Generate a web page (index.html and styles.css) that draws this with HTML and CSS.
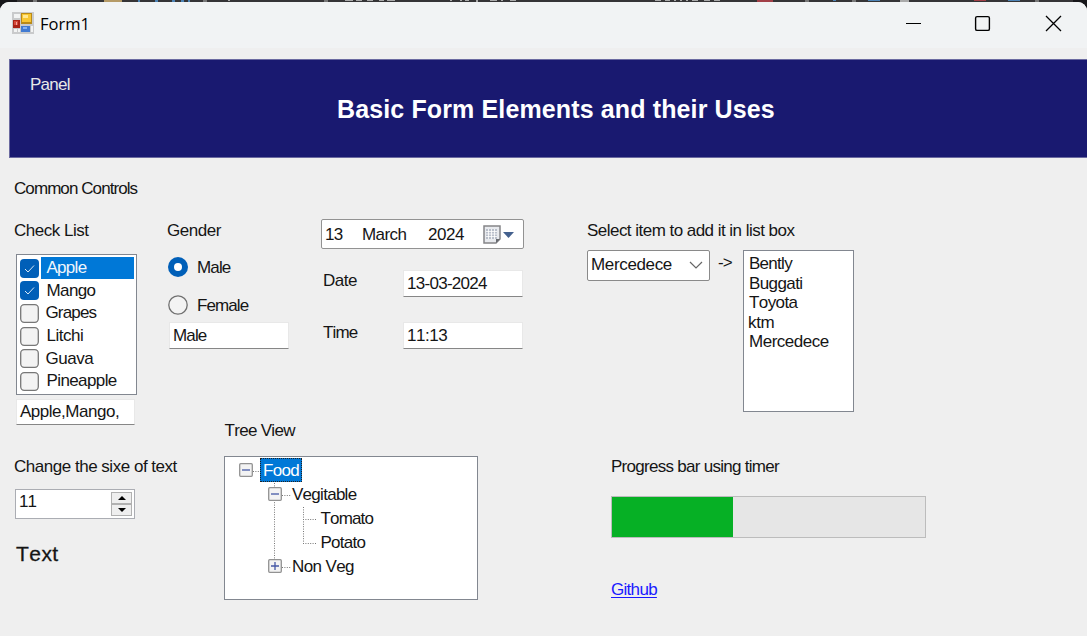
FILE: index.html
```html
<!DOCTYPE html>
<html lang="en">
<head>
<meta charset="utf-8">
<title>Form1</title>
<link rel="stylesheet" href="styles.css">
</head>
<body>
<div class="desktop">
<svg class="backdrop" width="1087" height="8" aria-hidden="true">
  <path fill="#353436" d="M0 0h1087v8H0z"/>
  <path fill="#17171a" d="M0 0h17v8H0zM1073 0h14v8h-14z"/>
  <path fill="#b59a66" d="M104 0h18v2h-18z"/>
  <path fill="#4d83b5" d="M138 0h2v2h-2zM155 0h3v2h-3zM172 0h3v2h-3zM181 0h3v2h-3zM188 0h2v2h-2zM833 0h3v1h-3zM868 0h12v1h-12zM1008 0h12v1h-12z"/>
  <path fill="#777" d="M33 0h4v2h-4zM203 0h4v2h-4zM324 0h4v2h-4zM805 0h4v2h-4zM852 0h4v2h-4zM1035 0h4v2h-4z"/>
  <path fill="#aaa" d="M228 0h2v1h-2zM345 0h8v1h-8zM356 0h6v1h-6zM367 0h6v1h-6zM379 0h5v1h-5zM387 0h8v1h-8zM450 0h2v1h-2zM460 0h2v1h-2zM465 0h4v1h-4zM476 0h2v2h-2zM490 0h7v1h-7zM501 0h2v1h-2zM510 0h6v1h-6zM900 0h9v2h-9zM655 0h6v1h-6zM665 0h5v1h-5zM674 0h2v1h-2zM680 0h2v1h-2zM686 0h2v1h-2zM692 0h6v1h-6zM704 0h6v1h-6zM714 0h6v1h-6z"/>
  <path fill="#a23f47" d="M757 0h16v2h-16zM974 0h12v1h-12z"/>
</svg>
<div class="window">
  <header class="titlebar">
    <svg class="app-icon" width="22" height="22" viewBox="0 0 22 22">
      <path fill="#c9cacb" d="M0 0h22v22H0z"/>
      <path fill="#f2f3f3" d="M2 2h6v4H2zM2 17h3v3H2zM6 17h2v3H6zM19 14h2v6h-2z"/>
      <path fill="#b98a18" d="M9 1h11v11H9z"/><path fill="#f8c632" d="M10 2h9v8h-9z"/><path fill="#ffe892" d="M11 3h5v3h-5z"/>
      <path fill="#a82318" d="M1 8h7v8H1z"/><path fill="#d5493b" d="M2 9h4v4H2z"/><path fill="#f3a59c" d="M4 10h1v3H4z"/>
      <path fill="#427bd2" d="M9 14h9v6H9z"/><path fill="#83b1f4" d="M11 15h4v2h-4z"/>
    </svg>
    <span class="window-title">Form1</span>
    <svg class="window-buttons" width="158" height="18" viewBox="0 0 158 18" fill="none" stroke="#000">
      <path d="M1 9.5h15" stroke-width="1.1"/>
      <rect x="70.6" y="2.6" width="13.8" height="13.8" rx="1.5" stroke-width="1.4"/>
      <path d="M141 2l15 15M156 2L141 17" stroke-width="1.3"/>
    </svg>
  </header>

  <section class="banner">
    <span class="banner-tag tight">Panel</span>
    <h1>Basic Form Elements and their Uses</h1>
  </section>

  <main>
    <div class="label section-name tightest">Common Controls</div>
    <div class="columns">
      <section class="choices">
        <div class="label loose">Check List</div>
        <div class="checklist">
          <div class="check-row"><svg class="check" viewBox="0 0 19 19"><rect width="19" height="19" rx="4" fill="#005fb8"/><path d="M5 10l3 3 6-6.5" fill="none" stroke="#d8e8f6"/></svg><span class="selected tight">Apple</span></div>
          <div class="check-row"><svg class="check" viewBox="0 0 19 19"><rect width="19" height="19" rx="4" fill="#005fb8"/><path d="M5 10l3 3 6-6.5" fill="none" stroke="#d8e8f6"/></svg><span>Mango</span></div>
          <div class="check-row"><svg class="check" viewBox="0 0 19 19"><rect x=".7" y=".7" width="17.6" height="17.6" rx="3.5" fill="#f3f3f3" stroke="#777" stroke-width="1.3"/></svg><span class="round tighter">Grapes</span></div>
          <div class="check-row"><svg class="check" viewBox="0 0 19 19"><rect x=".7" y=".7" width="17.6" height="17.6" rx="3.5" fill="#f3f3f3" stroke="#777" stroke-width="1.3"/></svg><span class="loose">Litchi</span></div>
          <div class="check-row"><svg class="check" viewBox="0 0 19 19"><rect x=".7" y=".7" width="17.6" height="17.6" rx="3.5" fill="#f3f3f3" stroke="#777" stroke-width="1.3"/></svg><span class="round loose">Guava</span></div>
          <div class="check-row"><svg class="check" viewBox="0 0 19 19"><rect x=".7" y=".7" width="17.6" height="17.6" rx="3.5" fill="#f3f3f3" stroke="#777" stroke-width="1.3"/></svg><span>Pineapple</span></div>
        </div>
        <div class="textbox picked loose">Apple,Mango,</div>
        <div class="label size-label loose">Change the sixe of text</div>
        <div class="spinner">
          <span>11</span>
          <div class="spin-buttons">
            <div><svg width="8" height="4"><path d="M0 4l4-4 4 4z"/></svg></div>
            <div><svg width="8" height="4"><path d="M0 0l4 4 4-4z"/></svg></div>
          </div>
        </div>
        <div class="sample">Text</div>
      </section>

      <section class="middle">
        <div class="middle-top">
          <div class="gender">
            <div class="label loose">Gender</div>
            <div class="radio-row"><svg width="20" height="20"><circle cx="10" cy="10" r="10" fill="#005fb8"/><circle cx="10" cy="10" r="4" fill="#fff"/></svg><span class="tighter">Male</span></div>
            <div class="radio-row"><svg width="20" height="20"><circle cx="10" cy="10" r="9.2" fill="#f3f3f3" stroke="#707070" stroke-width="1.3"/></svg><span class="tightest">Female</span></div>
            <div class="textbox gender-value tighter">Male</div>
          </div>
          <div class="dates">
            <div class="datepicker">
              <span class="day">13</span><span class="month">March</span><span class="year loose">2024</span>
              <svg width="32" height="20" viewBox="0 0 32 20">
                <path d="M1 1h16v13l-4 4H1z" fill="#e8eaee" stroke="#858588" stroke-width="1.5"/>
                <path d="M3 4h11v10H3z" fill="#b9bfca"/>
                <path d="M3 6.5h11M3 9h11M3 11.5h11M5.5 4v10M8.5 4v10M11.5 4v10" stroke="#fff" stroke-width=".8"/>
                <path d="M13 18v-4h4z" fill="#686b70"/>
                <path d="M20 7h11l-5.5 6z" fill="#44618e"/>
              </svg>
            </div>
            <div class="field"><span class="label loose">Date</span><div class="textbox tight">13-03-2024</div></div>
            <div class="field"><span class="label tighter">Time</span><div class="textbox loose">11:13</div></div>
          </div>
        </div>
        <div class="label tree-label">Tree View</div>
        <div class="tree">
          <svg class="tree-lines" width="251" height="142" fill="none" stroke="#777" stroke-dasharray="1 1.4">
            <path d="M28 14.5h7M49.5 26v80M57 38.5h9M78.5 50v37M78 62.5h13M78 86.5h13M57 110.5h9"/>
          </svg>
          <div class="node"><svg class="toggle" viewBox="0 0 14 14"><rect x=".7" y=".7" width="12.6" height="12.6" rx="1" fill="#f3f3f3" stroke="#929292" stroke-width="1.3"/><path d="M3 7h8" stroke="#4558a6" stroke-width="1.3"/></svg><span class="focused tight">Food</span></div>
          <div class="node level-1"><svg class="toggle" viewBox="0 0 14 14"><rect x=".7" y=".7" width="12.6" height="12.6" rx="1" fill="#f3f3f3" stroke="#929292" stroke-width="1.3"/><path d="M3 7h8" stroke="#4558a6" stroke-width="1.3"/></svg><span class="node-name tight">Vegitable</span></div>
          <div class="node level-2"><span class="node-name tighter">Tomato</span></div>
          <div class="node level-2"><span class="node-name tight">Potato</span></div>
          <div class="node level-1"><svg class="toggle" viewBox="0 0 14 14"><rect x=".7" y=".7" width="12.6" height="12.6" rx="1" fill="#f3f3f3" stroke="#929292" stroke-width="1.3"/><path d="M3 7h8M7 3v8" stroke="#4558a6" stroke-width="1.3"/></svg><span class="node-name">Non Veg</span></div>
        </div>
      </section>

      <section class="right">
        <div class="label select-label">Select item to add it in list box</div>
        <div class="transfer">
          <div class="combo"><span class="loosest">Mercedece</span><svg width="14" height="8"><path d="M1 1l6 6 6-6" fill="none" stroke="#666" stroke-width="1.2"/></svg></div>
          <span class="arrow">-&gt;</span>
          <div class="listbox">
            <div class="tight">Bently</div><div>Buggati</div><div>Toyota</div><div class="outdent loosest">ktm</div><div class="loose">Mercedece</div>
          </div>
        </div>
        <div class="progress-group">
          <div class="label tight">Progress bar using timer</div>
          <div class="progress"><div class="progress-fill"></div></div>
          <a class="link" href="#">Github</a>
        </div>
      </section>
    </div>
  </main>
</div>
</div>
</body>
</html>
```

FILE: styles.css
```css
* { box-sizing: border-box; }
body {
  margin: 0;
  overflow: hidden;
  background: #353436;
  color: #151515;
  font: 17px/20px "Liberation Sans", Arial, sans-serif;
  font-kerning: none;
  letter-spacing: -0.6px;
  white-space: nowrap;
}
svg { display: block; flex: none; }
.desktop { position: relative; width: 1087px; height: 636px; }
.backdrop { position: absolute; top: 0; left: 0; }
.window { position: absolute; inset: 2px 0 0; border-radius: 9px 9px 0 0; overflow: hidden; background: #efefef; }

.loosest { letter-spacing: -0.35px; }
.loose { letter-spacing: -0.48px; }
.tight { letter-spacing: -0.72px; }
.tighter { letter-spacing: -0.85px; }
.tightest { letter-spacing: -0.92px; }

.titlebar { display: flex; align-items: flex-start; height: 46px; padding: 10px 24px 0 12px; background: #f1f3f4; }
.window-title { margin: 2px auto 0 6px; color: #000; font: 16.5px/20px "Open Sans", "Noto Sans", sans-serif; letter-spacing: 0; }
.window-buttons { margin-top: 2px; }

.banner { height: 99px; margin: 11px 0 0 9px; padding: 15px 0 0 20px; border: solid #6b6aa0; border-width: 1px 0 1px 1px; background: #191970; color: #e8e8e8; }
.banner-tag { display: block; height: 20px; }
.banner h1 { margin: 0 0 0 307px; color: #fff; font-size: 25px; line-height: 28px; letter-spacing: 0.13px; }

main { padding: 20px 0 0 14px; }
.section-name { margin-bottom: 22px; }
.columns { display: flex; }
.label { display: block; height: 20px; line-height: 22px; }
.choices { width: 153px; }
.checklist { width: 121px; height: 141px; margin: 14px 0 0 1.5px; padding: 2px 2px 0 3px; border: 1.5px solid #828790; background: #fff; }
.check-row { display: flex; align-items: center; height: 22.6px; }
.check { width: 19px; height: 19px; }
.check-row span { flex: 1; height: 22px; margin-left: 2px; padding-left: 6px; line-height: 21px; }
.check-row .selected { background: #0078d7; color: #f0f6fc; }
.check-row .round { padding-left: 5px; }
.textbox { width: 119px; height: 27px; padding: 3px 3px 0; border: 1px solid #e8e8e8; border-bottom: 1.5px solid #868686; background: #fff; }
.picked { height: 26px; margin: 4px 0 0 2px; padding-top: 2px; }
.size-label { margin-top: 31px; }
.spinner { display: flex; justify-content: space-between; width: 120px; height: 30px; margin: 13px 0 0 1px; padding: 2px 2px 2px 3px; border: 1.5px solid #abadb3; background: #fff; letter-spacing: -0.9px; }
.spin-buttons { display: grid; grid-template-rows: 1fr 1fr; width: 21px; }
.spin-buttons div { display: grid; place-items: center; border: 1px solid #b1b1b1; background: #efefef; }
.sample { margin: 24px 0 0 2px; font-size: 21px; line-height: 22px; letter-spacing: 0.45px; -webkit-text-stroke: 0.3px #151515; }

.middle { width: 420px; }
.middle-top { display: flex; height: 200px; }
.gender { width: 154px; }
.radio-row { display: flex; align-items: center; gap: 9px; height: 20px; margin: 17px 0 0 1px; line-height: 23px; }
.radio-row + .radio-row { margin-top: 18px; }
.gender-value { margin: 7px 0 0 2px; width: 120px; }
.datepicker { display: flex; width: 203px; height: 30px; margin-top: -1px; padding: 5px 8px 0 3px; border: 1.5px solid #929292; border-radius: 2px; background: #fff; }
.day { width: 37px; }
.month { width: 66px; }
.year { flex: 1; }
.field { display: flex; justify-content: space-between; width: 200px; margin: 21px 0 0 2px; }
.field .textbox { width: 120px; }
.field + .field { margin-top: 25px; }
.tree-label { padding-left: 57.5px; letter-spacing: -0.7px; }
.tree { position: relative; width: 254px; height: 144px; margin: 16px 0 0 57px; padding: 1px 0 0 14px; border: 1.5px solid #828790; background: #fff; }
.tree-lines { position: absolute; top: 0; left: 0; }
.node { position: relative; display: flex; align-items: center; height: 24px; gap: 10px; line-height: 22px; }
.node-name { padding-top: 2px; }
.toggle { width: 14px; height: 14px; }
.level-1 { padding-left: 29px; }
.level-2 { padding-left: 81.5px; }
.focused { height: 24px; margin-left: -3px; padding: 1px 2px 0 2px; border: 1px dotted #e68a2e; outline: 1px dotted #222; outline-offset: -1px; background: #0078d7; color: #fff; }

.select-label { letter-spacing: -0.53px; }
.transfer { display: flex; align-items: flex-start; margin-top: 10px; }
.combo { display: flex; align-items: center; justify-content: space-between; width: 123px; height: 31px; padding: 0 6px 1px 3px; border: 1.5px solid #8a8a8a; border-radius: 2px; background: #fff; }
.arrow { width: 26px; margin: 3px 0 0 8px; letter-spacing: -1px; }
.listbox { width: 111px; height: 162px; margin-left: -1px; padding: 3px 0 0 5px; border: 1.5px solid #828790; background: #fff; line-height: 19.5px; }
.outdent { margin-left: -1px; }
.progress-group { margin: 44px 0 0 24px; }
.progress { width: 315px; height: 42px; margin-top: 20px; border: 1.5px solid #bcbcbc; background: #e6e6e6; }
.progress-fill { width: 121px; height: 100%; background: #06b025; }
.link { display: inline-block; margin-top: 42px; color: #1a1aff; letter-spacing: -0.7px; text-decoration: underline; text-underline-offset: 2px; }
```
